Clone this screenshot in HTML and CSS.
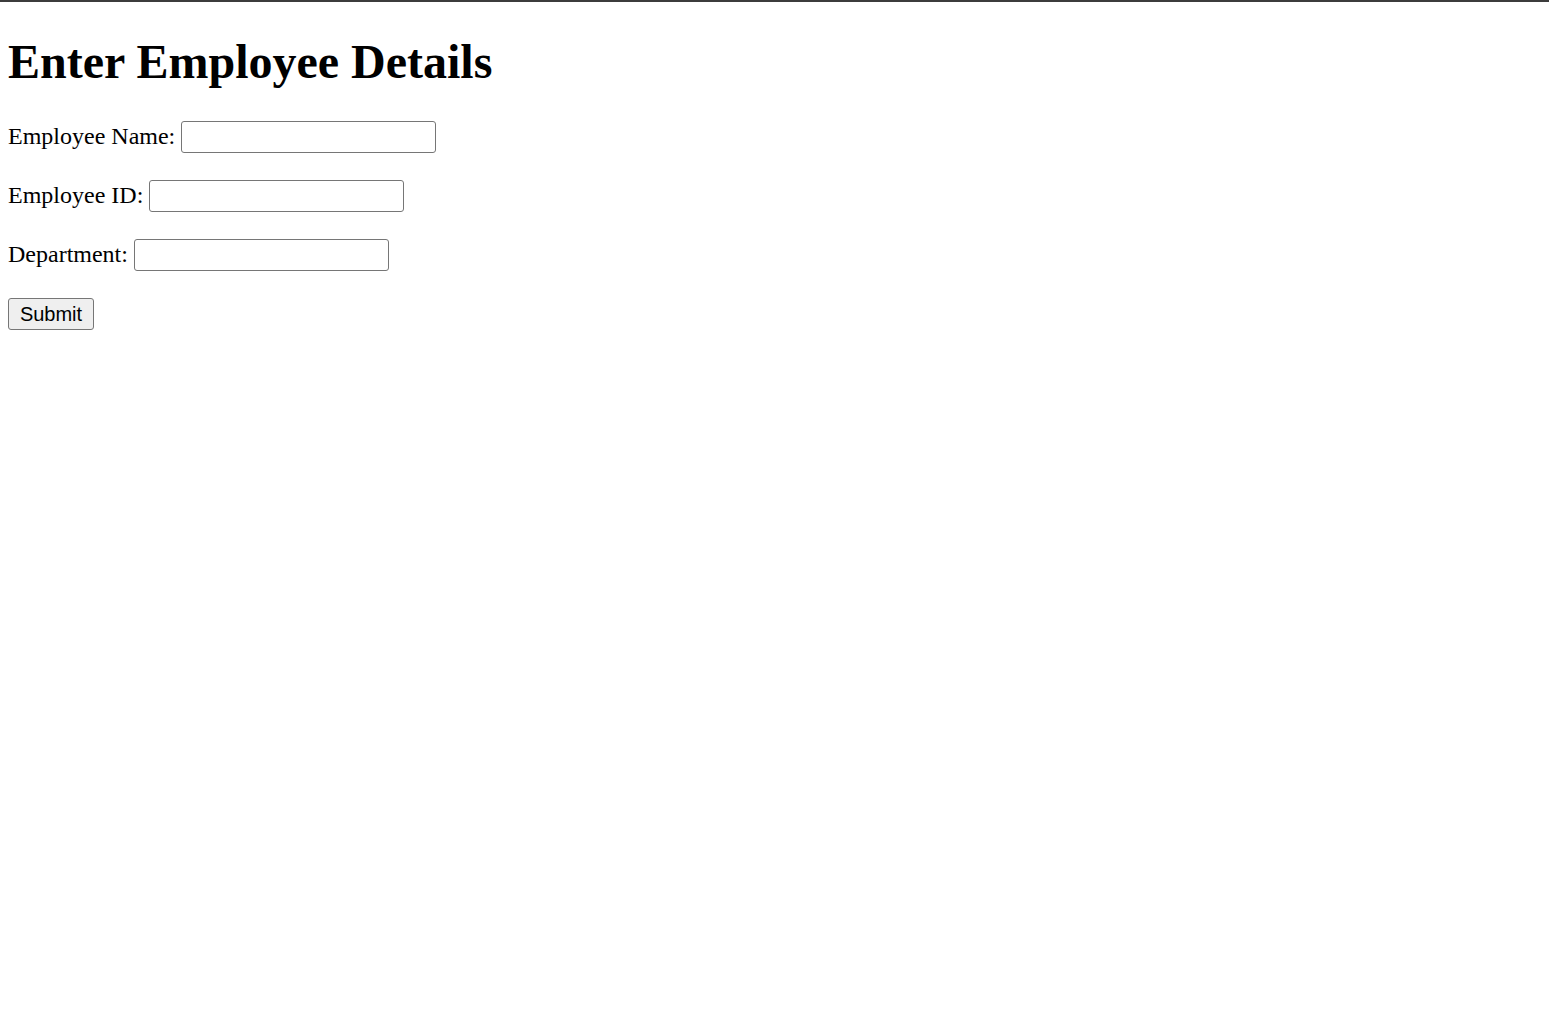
FILE: index.html
```html
<!DOCTYPE html>
<html lang="en">
<head>
<meta charset="utf-8">
<title>Enter Employee Details</title>
<link rel="stylesheet" href="styles.css">
</head>
<body>
<div class="topline"></div>
<h1 class="title">Enter Employee Details</h1>
<form class="emp-form">
  <p class="row"><label class="lbl" for="name">Employee Name:</label> <input class="field" type="text" id="name" name="name"></p>
  <p class="row"><label class="lbl" for="eid">Employee ID:</label> <input class="field" type="text" id="eid" name="eid"></p>
  <p class="row"><label class="lbl" for="dept">Department:</label> <input class="field" type="text" id="dept" name="dept"></p>
  <p class="row"><button class="submit" type="submit">Submit</button></p>
</form>
</body>
</html>
```
FILE: styles.css
```css
html {
  background: #ffffff;
}
body {
  margin: 8px;
  font-family: "Liberation Serif", "Times New Roman", serif;
  font-size: 24px;
  color: #000000;
}
.topline {
  position: fixed;
  top: 0;
  left: 0;
  right: 0;
  height: 2px;
  background: #3c3c3c;
}
.title {
  font-size: 48px;
  font-weight: bold;
  margin: 26px 0 32px;
}
.row {
  margin: 27px 0;
}
.lbl {
  font-size: 24px;
}
.field {
  box-sizing: border-box;
  width: 255px;
  height: 32px;
  padding: 1px 3px;
  border: 1px solid #767676;
  border-radius: 3px;
  font-family: "Liberation Sans", Arial, sans-serif;
  font-size: 20px;
  background: #ffffff;
  vertical-align: baseline;
}
.submit {
  box-sizing: border-box;
  width: 86px;
  height: 32px;
  padding: 1px 9px;
  border: 1px solid #767676;
  border-radius: 3px;
  background: #efefef;
  font-family: "Liberation Sans", Arial, sans-serif;
  font-size: 20px;
  color: #000000;
}
```
